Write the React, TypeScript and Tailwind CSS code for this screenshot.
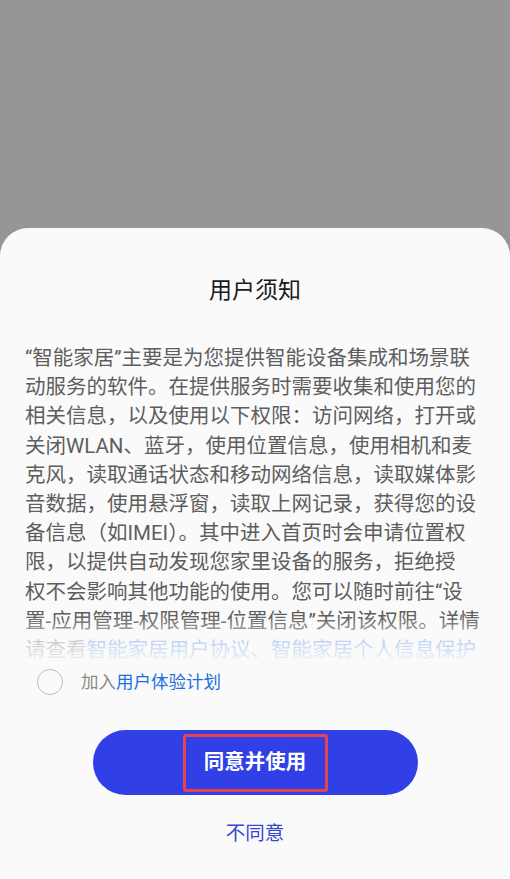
import React from "react";

const lines: React.ReactNode[] = [
  "“智能家居”主要是为您提供智能设备集成和场景联",
  "动服务的软件。在提供服务时需要收集和使用您的",
  "相关信息，以及使用以下权限：访问网络，打开或",
  "关闭WLAN、蓝牙，使用位置信息，使用相机和麦",
  "克风，读取通话状态和移动网络信息，读取媒体影",
  "音数据，使用悬浮窗，读取上网记录，获得您的设",
  "备信息（如IMEI）。其中进入首页时会申请位置权",
  "限，以提供自动发现您家里设备的服务，拒绝授",
  "权不会影响其他功能的使用。您可以随时前往“设",
  "置-应用管理-权限管理-位置信息”关闭该权限。详情",
];

export default function App() {
  return (
    <div
      className="w-[510px] h-[879px] bg-[#969696] flex flex-col overflow-hidden"
      style={{ fontFamily: "Roboto, 'Noto Sans CJK SC', sans-serif" }}
    >
      <div className="h-[228px] shrink-0" />
      <div className="flex-1 bg-[#fafafa] rounded-t-[28px] flex flex-col items-center">
        <div className="pt-[48px] text-[23px] leading-[30px] text-[#1b1b1b]">用户须知</div>
        <div className="relative mt-[38px] w-full px-[25px] h-[322px] overflow-hidden">
          <div className="text-[20.5px] leading-[29.2px] text-[#5e5e5e] whitespace-nowrap">
            {lines.map((l, i) => (
              <div key={i}>{l}</div>
            ))}
            <div>
              请查看<span className="text-[#2f7be0]">智能家居用户协议、智能家居个人信息保护</span>
            </div>
          </div>
          <div className="absolute left-0 right-0 bottom-0 h-[50px] bg-gradient-to-b from-[#fafafa]/0 via-[#fafafa]/70 to-[#fafafa]" />
        </div>
        <div className="w-full flex items-center h-[34px] px-[37px] mt-[-1px]">
          <div className="w-[26px] h-[26px] rounded-full border-[1.5px] border-[#bdbdbd]" />
          <div className="ml-[18px] text-[17.5px] leading-[24px] text-[#8a8a8a]">
            加入<span className="text-[#1d6fdc]">用户体验计划</span>
          </div>
        </div>
        <div className="mt-[31px] w-[325px] h-[65px] rounded-full bg-[#3040e6] flex items-center justify-center">
          <div className="w-[145px] h-[58px] border-[3px] border-[#e8424e] rounded-[3px] flex items-center justify-center text-white font-bold text-[20.5px]">
            同意并使用
          </div>
        </div>
        <div className="mt-[26px] text-[19.5px] leading-[26px] text-[#3546cf]">不同意</div>
      </div>
    </div>
  );
}
